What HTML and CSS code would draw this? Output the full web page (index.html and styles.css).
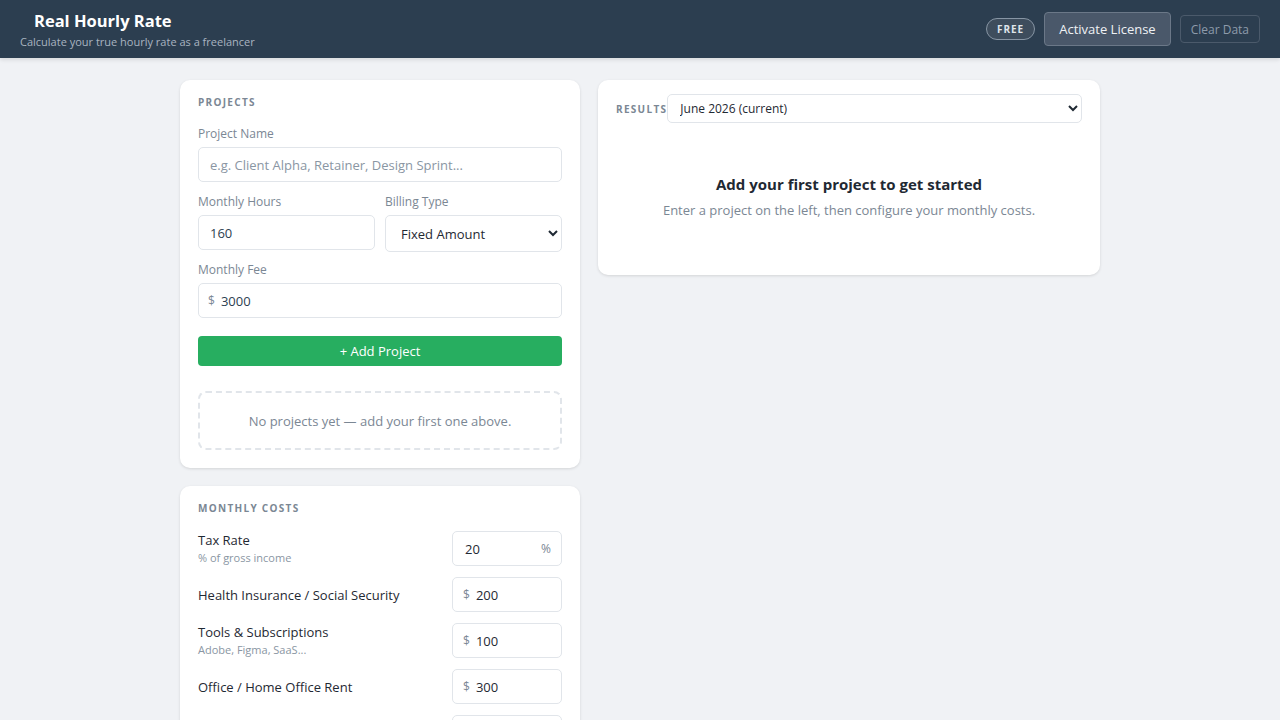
FILE: index.html
```html
<!DOCTYPE html>
<html>
<head>
    <title>Real Hourly Rate</title>
    <link rel="stylesheet" href="styles.css">
</head>
<body>

<header class="topbar">
    <div class="brand">
        <h1>Real Hourly Rate</h1>
        <p>Calculate your true hourly rate as a freelancer</p>
    </div>
    <div class="topbar-actions">
        <span class="badge">FREE</span>
        <button class="btn-license">Activate License</button>
        <button class="btn-clear">Clear Data</button>
    </div>
</header>

<main class="layout">
    <div class="column">
        <section class="card">
            <h3 class="card-title">Projects</h3>

            <div class="field">
                <label for="projectName">Project Name</label>
                <input type="text" id="projectName" placeholder="e.g. Client Alpha, Retainer, Design Sprint...">
            </div>

            <div class="field-row">
                <div class="field">
                    <label for="hours">Monthly Hours</label>
                    <input type="text" id="hours" value="160">
                </div>
                <div class="field">
                    <label for="billing">Billing Type</label>
                    <select id="billing">
                        <option>Fixed Amount</option>
                        <option>Hourly</option>
                    </select>
                </div>
            </div>

            <div class="field">
                <label for="fee">Monthly Fee</label>
                <div class="input-prefix">
                    <span>$</span>
                    <input type="text" id="fee" value="3000">
                </div>
            </div>

            <button class="btn-add">+ Add Project</button>

            <div class="empty-projects">No projects yet — add your first one above.</div>
        </section>

        <section class="card">
            <h3 class="card-title">Monthly Costs</h3>

            <div class="cost-row">
                <div class="cost-label">
                    <span>Tax Rate</span>
                    <small>% of gross income</small>
                </div>
                <div class="cost-input">
                    <input type="text" value="20">
                    <span class="suffix">%</span>
                </div>
            </div>
            <div class="cost-row">
                <div class="cost-label">
                    <span>Health Insurance / Social Security</span>
                </div>
                <div class="cost-input">
                    <span class="prefix">$</span>
                    <input type="text" value="200">
                </div>
            </div>
            <div class="cost-row">
                <div class="cost-label">
                    <span>Tools &amp; Subscriptions</span>
                    <small>Adobe, Figma, SaaS...</small>
                </div>
                <div class="cost-input">
                    <span class="prefix">$</span>
                    <input type="text" value="100">
                </div>
            </div>
            <div class="cost-row">
                <div class="cost-label">
                    <span>Office / Home Office Rent</span>
                </div>
                <div class="cost-input">
                    <span class="prefix">$</span>
                    <input type="text" value="300">
                </div>
            </div>
            <div class="cost-row">
                <div class="cost-label">
                    <span>Equipment</span>
                </div>
                <div class="cost-input">
                    <span class="prefix">$</span>
                    <input type="text" value="50">
                </div>
            </div>
        </section>
    </div>

    <div class="column">
        <section class="card results-card">
            <div class="results-head">
                <h3 class="card-title">Results</h3>
                <select>
                    <option>June 2026 (current)</option>
                </select>
            </div>
            <div class="results-empty">
                <h4>Add your first project to get started</h4>
                <p>Enter a project on the left, then configure your monthly costs.</p>
            </div>
        </section>
    </div>
</main>

</body>
</html>
```

FILE: styles.css
```css
body {
    margin: 0;
    font-family: "Open Sans", Arial, sans-serif;
    background-color: #f0f2f5;
    color: #2c3e50;
}
.topbar {
    height: 58px;
    background: #2c3e50;
    display: flex;
    align-items: center;
    justify-content: space-between;
    padding: 0 20px;
    box-sizing: border-box;
    box-shadow: 0 2px 4px rgba(0,0,0,0.1);
}
.brand {
    align-self: flex-start;
    padding-top: 10px;
}
.brand h1 {
    margin: 0 0 0 14px;
    font-size: 16.5px;
    font-weight: 700;
    color: white;
    line-height: 22px;
}
.brand p {
    margin: 2px 0 0;
    font-size: 11px;
    color: #a9b4c0;
    line-height: 16px;
}
.topbar-actions {
    display: flex;
    align-items: center;
    gap: 9px;
}
.badge {
    font-size: 10px;
    font-weight: 700;
    letter-spacing: 1px;
    color: #dfe4ea;
    border: 1px solid #8795a4;
    background: #3e4d5d;
    border-radius: 12px;
    padding: 3px 10px;
    line-height: 14px;
}
.topbar-actions button {
    font-family: inherit;
    border-radius: 4px;
    cursor: pointer;
}
.btn-license {
    background: #4a586a;
    border: 1px solid #6b7888;
    color: #eef1f4;
    font-size: 13px;
    padding: 0 14px;
    height: 34px;
}
.btn-clear {
    background: transparent;
    border: 1px solid #4b5a6b;
    color: #8e9bab;
    font-size: 12px;
    padding: 0 10px;
    height: 28px;
}
.layout {
    display: flex;
    justify-content: center;
    gap: 18px;
    padding: 22px 0;
}
.column {
    display: flex;
    flex-direction: column;
    gap: 18px;
}
.column:first-child {
    width: 400px;
}
.column:last-child {
    width: 502px;
}
.card {
    background: white;
    border-radius: 10px;
    box-shadow: 0 1px 3px rgba(0,0,0,0.12);
    padding: 15px 18px 18px;
}
.card-title {
    margin: 0 0 16px;
    font-size: 10px;
    font-weight: 700;
    letter-spacing: 1.3px;
    text-transform: uppercase;
    color: #7b8794;
    line-height: 14px;
}
.field {
    margin-bottom: 11px;
}
.field label {
    display: block;
    font-size: 12px;
    color: #7b8794;
    margin-bottom: 5px;
    line-height: 17px;
}
.field input,
.field select {
    width: 100%;
    box-sizing: border-box;
    height: 35px;
    padding: 0 11px;
    border: 1px solid #e1e5ea;
    border-radius: 5px;
    font-family: inherit;
    font-size: 13px;
    color: #2c3e50;
    background: white;
}
.field select {
    height: 37px;
    color: #1f2933;
}
.field input::placeholder {
    color: #8a96a3;
}
.field-row {
    display: grid;
    grid-template-columns: 1fr 1fr;
    gap: 10px;
}
.field-row .field {
    margin-bottom: 9px;
}
.input-prefix {
    display: flex;
    align-items: center;
    height: 35px;
    border: 1px solid #e1e5ea;
    border-radius: 5px;
    box-sizing: border-box;
    padding-left: 9px;
}
.input-prefix span {
    font-size: 12px;
    color: #7b8794;
}
.input-prefix input {
    border: none;
    height: 33px;
    padding: 0 6px 0 6px;
}
.btn-add {
    width: 100%;
    height: 30px;
    margin-top: 7px;
    background: #27ae60;
    border: none;
    border-radius: 4px;
    color: white;
    font-family: inherit;
    font-size: 13px;
    cursor: pointer;
}
.empty-projects {
    margin-top: 25px;
    border: 2px dashed #e1e5ea;
    border-radius: 8px;
    height: 59px;
    box-sizing: border-box;
    display: flex;
    align-items: center;
    justify-content: center;
    font-size: 13px;
    color: #7b8794;
}
.cost-row {
    display: flex;
    align-items: center;
    justify-content: space-between;
    margin-bottom: 11px;
}
.cost-label span {
    display: block;
    font-size: 13px;
    color: #1f2933;
    line-height: 18px;
}
.cost-label small {
    display: block;
    font-size: 11px;
    color: #8a96a3;
    line-height: 17px;
}
.cost-input {
    width: 110px;
    height: 35px;
    box-sizing: border-box;
    border: 1px solid #e1e5ea;
    border-radius: 5px;
    display: flex;
    align-items: center;
    padding: 0 10px;
}
.cost-input input {
    border: none;
    width: 100%;
    min-width: 0;
    font-family: inherit;
    font-size: 13px;
    color: #1f2933;
    padding: 0 0 0 2px;
    outline: none;
}
.cost-input .prefix {
    font-size: 12px;
    color: #7b8794;
    margin-right: 4px;
}
.cost-input .suffix {
    font-size: 12px;
    color: #7b8794;
}
.results-card {
    padding: 14px 18px 56px;
}
.results-head {
    display: flex;
    align-items: center;
}
.results-head .card-title {
    margin: 0;
}
.results-head select {
    flex: 1;
    height: 29px;
    border: 1px solid #e1e5ea;
    border-radius: 5px;
    font-family: inherit;
    font-size: 12px;
    color: #1f2933;
    background: white;
    padding: 0 8px;
}
.results-empty {
    text-align: center;
    padding-top: 51px;
}
.results-empty h4 {
    margin: 0 0 7px;
    font-size: 15px;
    font-weight: 700;
    color: #1f2933;
    line-height: 20px;
}
.results-empty p {
    margin: 0;
    font-size: 13px;
    color: #7b8794;
    line-height: 18px;
}
```
